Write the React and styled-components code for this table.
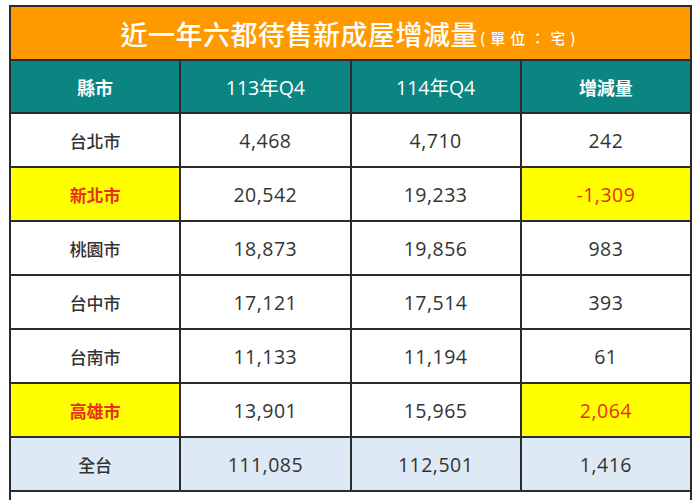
import React from 'react';
import styled, { createGlobalStyle } from 'styled-components';

const GlobalStyle = createGlobalStyle`
  html, body {
    margin: 0;
    padding: 0;
    background: #ffffff;
  }
  body {
    font-family: "Noto Sans CJK TC", "Noto Sans", sans-serif;
  }
`;

const Page = styled.div`
  width: 700px;
  height: 500px;
  overflow: hidden;
  padding: 5px 0 0 9px;
  box-sizing: border-box;
`;

const Table = styled.table`
  width: 683px;
  border-collapse: collapse;
  table-layout: fixed;
  color: #333333;
`;

const TitleCell = styled.th`
  height: 52px;
  padding: 0;
  background: #ff9900;
  border: 2px solid #2b2b2b;
  color: #ffffff;
  font-size: 27px;
  font-weight: 500;
  letter-spacing: 0.5px;
  text-align: center;
  vertical-align: middle;
`;

const Unit = styled.span`
  font-size: 15px;
  font-weight: 500;
  letter-spacing: 5px;
  margin-left: 2px;
  position: relative;
  top: -1px;
`;

const HeadCell = styled.th`
  height: 51px;
  padding: 0;
  background: #0b8582;
  border: 2px solid #2b2b2b;
  color: #ffffff;
  font-family: ${p => (p.$num ? '"Open Sans", "Noto Sans CJK TC", sans-serif' : 'inherit')};
  font-size: ${p => (p.$num ? '19.5px' : '18px')};
  font-weight: ${p => (p.$num ? 400 : 700)};
  text-align: center;
`;

const Cell = styled.td`
  height: 52px;
  padding: 0;
  border: 2px solid #2b2b2b;
  text-align: center;
  font-family: ${p => (p.$name ? 'inherit' : '"Open Sans", sans-serif')};
  font-size: ${p => (p.$name ? '17px' : '19.5px')};
  letter-spacing: ${p => (p.$name ? '0' : '0.5px')};
  font-weight: ${p => (p.$name ? (p.$mark ? 700 : 500) : 400)};
  color: ${p => (p.$mark ? '#e8311a' : '#333333')};
  background: ${p => (p.$mark ? '#ffff00' : p.$total ? '#dde9f5' : '#ffffff')};
`;

const rows = [
  { city: '台北市', a: '4,468', b: '4,710', d: '242' },
  { city: '新北市', a: '20,542', b: '19,233', d: '-1,309', hot: true },
  { city: '桃園市', a: '18,873', b: '19,856', d: '983' },
  { city: '台中市', a: '17,121', b: '17,514', d: '393' },
  { city: '台南市', a: '11,133', b: '11,194', d: '61' },
  { city: '高雄市', a: '13,901', b: '15,965', d: '2,064', hot: true },
  { city: '全台', a: '111,085', b: '112,501', d: '1,416', total: true },
];

export default function App() {
  return (
    <>
      <GlobalStyle />
      <Page>
        <Table>
          <thead>
            <tr>
              <TitleCell colSpan={4}>
                近一年六都待售新成屋增減量<Unit>(單位：宅)</Unit>
              </TitleCell>
            </tr>
            <tr>
              <HeadCell>縣市</HeadCell>
              <HeadCell $num>113年Q4</HeadCell>
              <HeadCell $num>114年Q4</HeadCell>
              <HeadCell>增減量</HeadCell>
            </tr>
          </thead>
          <tbody>
            {rows.map(r => (
              <tr key={r.city}>
                <Cell $name $mark={r.hot} $total={r.total}>{r.city}</Cell>
                <Cell $total={r.total}>{r.a}</Cell>
                <Cell $total={r.total}>{r.b}</Cell>
                <Cell $mark={r.hot} $total={r.total}>{r.d}</Cell>
              </tr>
            ))}
            <tr>
              <Cell colSpan={4} />
            </tr>
          </tbody>
        </Table>
      </Page>
    </>
  );
}
